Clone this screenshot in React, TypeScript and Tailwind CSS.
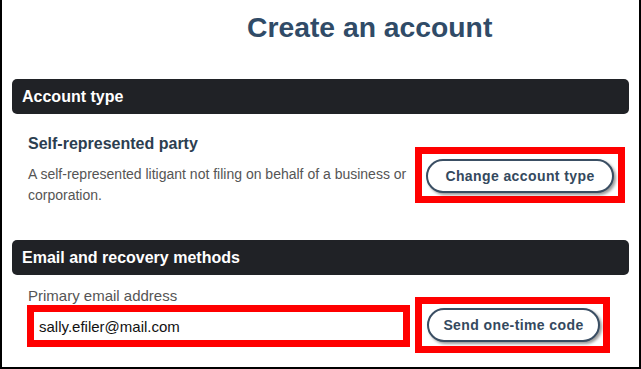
const App = () => {
  return (
    <div className="h-[369px] w-[641px] border-x-2 border-b-2 border-black bg-white font-['Liberation_Sans',Arial,sans-serif]">
      {/* Title */}
      <h1 className="pt-[9px] pl-[245px] text-[28.3px] font-bold leading-[36px] text-[#304b67]">
        Create an account
      </h1>

      {/* Account type */}
      <div className="mx-[10px] mt-[34px] flex h-[35px] items-center rounded-[5px] bg-[#202226] pl-[10px]">
        <h2 className="text-[16px] font-bold text-white">Account type</h2>
      </div>

      <div className="flex items-start pl-[26px] pt-[18px]">
        <div className="w-[387px]">
          <h3 className="text-[16px] font-bold leading-[24px] text-[#2c3e50]">Self-represented party</h3>
          <p className="mt-[8px] text-[14px] leading-[21px] text-[#555]">
            A self-represented litigant not filing on behalf of a business or corporation.
          </p>
        </div>
        <div className="mt-[15px] w-[210px] border-[7px] border-[#ff0000] px-[4px] pt-[5px] pb-[3px]">
          <button className="h-[34px] w-[188px] rounded-full border-2 border-[#3a4e63] bg-white text-[14px] font-bold tracking-[0.4px] text-[#34495e] shadow-[2px_2px_3px_rgba(0,0,0,0.4)]">
            Change account type
          </button>
        </div>
      </div>

      {/* Email and recovery methods */}
      <div className="mx-[10px] mt-[34px] flex h-[35px] items-center rounded-[5px] bg-[#202226] pl-[10px]">
        <h2 className="text-[16px] font-bold text-white">Email and recovery methods</h2>
      </div>

      <div className="flex items-end pl-[25px] pt-[12px]">
        <div className="w-[383px] pb-[6px]">
          <label className="block pl-[1px] text-[15px] leading-[18px] text-[#555]">Primary email address</label>
          <div className="border-[7px] border-[#ff0000]">
            <input
              readOnly
              value="sally.efiler@mail.com"
              className="block h-[28px] w-full bg-white pl-[5px] text-[15px] text-[#111] outline-none"
            />
          </div>
        </div>
        <div className="ml-[5px] w-[195px] border-[7px] border-[#ff0000] pl-[5px] pr-[3px] pt-[4px] pb-[4px]">
          <button className="h-[34px] w-[173px] rounded-full border-2 border-[#3a4e63] bg-white text-[14px] font-bold tracking-[0.4px] text-[#34495e] shadow-[2px_2px_3px_rgba(0,0,0,0.4)]">
            Send one-time code
          </button>
        </div>
      </div>
    </div>
  );
};

export default App;
